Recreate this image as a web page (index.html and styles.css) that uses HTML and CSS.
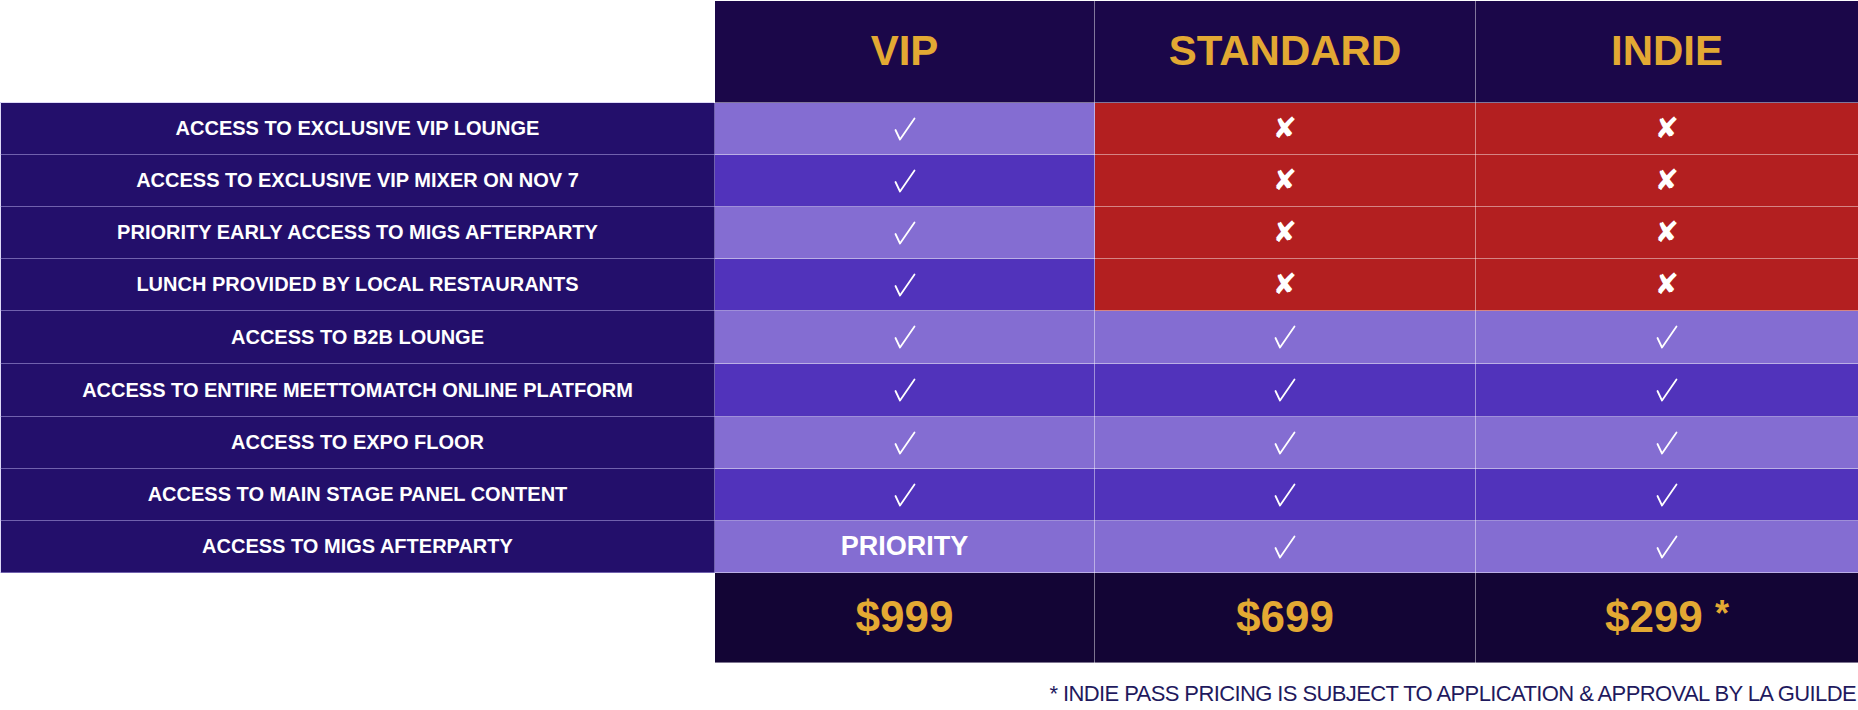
FILE: index.html
```html
<!DOCTYPE html>
<html>
<head>
  <title>Pass Comparison</title>
  <link rel="stylesheet" href="styles.css">
</head>
<body>
  <table class="passes">
    <colgroup>
      <col class="col-feature">
      <col class="col-vip">
      <col class="col-standard">
      <col class="col-indie">
    </colgroup>
    <thead>
      <tr class="head-row">
        <th class="blank"></th>
        <th>VIP</th>
        <th>STANDARD</th>
        <th>INDIE</th>
      </tr>
    </thead>
    <tbody>
      <tr class="light">
        <td class="feature">ACCESS TO EXCLUSIVE VIP LOUNGE</td>
        <td><span class="yes"></span></td>
        <td class="no"><span>&#10008;</span></td>
        <td class="no"><span>&#10008;</span></td>
      </tr>
      <tr class="dark">
        <td class="feature">ACCESS TO EXCLUSIVE VIP MIXER ON NOV 7</td>
        <td><span class="yes"></span></td>
        <td class="no"><span>&#10008;</span></td>
        <td class="no"><span>&#10008;</span></td>
      </tr>
      <tr class="light">
        <td class="feature">PRIORITY EARLY ACCESS TO MIGS AFTERPARTY</td>
        <td><span class="yes"></span></td>
        <td class="no"><span>&#10008;</span></td>
        <td class="no"><span>&#10008;</span></td>
      </tr>
      <tr class="dark">
        <td class="feature">LUNCH PROVIDED BY LOCAL RESTAURANTS</td>
        <td><span class="yes"></span></td>
        <td class="no"><span>&#10008;</span></td>
        <td class="no"><span>&#10008;</span></td>
      </tr>
      <tr class="light tall">
        <td class="feature">ACCESS TO B2B LOUNGE</td>
        <td><span class="yes"></span></td>
        <td><span class="yes"></span></td>
        <td><span class="yes"></span></td>
      </tr>
      <tr class="dark tall">
        <td class="feature">ACCESS TO ENTIRE MEETTOMATCH ONLINE PLATFORM</td>
        <td><span class="yes"></span></td>
        <td><span class="yes"></span></td>
        <td><span class="yes"></span></td>
      </tr>
      <tr class="light">
        <td class="feature">ACCESS TO EXPO FLOOR</td>
        <td><span class="yes"></span></td>
        <td><span class="yes"></span></td>
        <td><span class="yes"></span></td>
      </tr>
      <tr class="dark">
        <td class="feature">ACCESS TO MAIN STAGE PANEL CONTENT</td>
        <td><span class="yes"></span></td>
        <td><span class="yes"></span></td>
        <td><span class="yes"></span></td>
      </tr>
      <tr class="light">
        <td class="feature">ACCESS TO MIGS AFTERPARTY</td>
        <td class="priority">PRIORITY</td>
        <td><span class="yes"></span></td>
        <td><span class="yes"></span></td>
      </tr>
    </tbody>
    <tfoot>
      <tr class="price-row">
        <td class="blank"></td>
        <td>$999</td>
        <td>$699</td>
        <td>$299 <span class="star">*</span></td>
      </tr>
    </tfoot>
  </table>

  <p class="note">* INDIE PASS PRICING IS SUBJECT TO APPLICATION &amp; APPROVAL BY LA GUILDE</p>
</body>
</html>
```

FILE: styles.css
```css
body {
  margin: 0;
  background: #fff;
  font-family: "Liberation Sans", Arial, sans-serif;
}

.passes {
  width: 1858px;
  table-layout: fixed;
  border-collapse: collapse;
  color: #fff;
  text-align: center;
}
.col-feature { width: 714px; }
.col-vip { width: 380px; }
.col-standard { width: 381px; }
.col-indie { width: 383px; }

.passes th,
.passes td {
  border: 1px solid rgba(255, 255, 255, 0.45);
  padding: 0;
  vertical-align: middle;
}
.passes .blank {
  background: #fff;
  border: none;
}

.head-row {
  height: 102px;
}
.head-row th {
  background: #1b0749;
  color: #e3a933;
  font-size: 42px;
  font-weight: bold;
  padding-bottom: 2px;
}

tbody tr {
  height: 52px;
}
tbody tr.tall {
  height: 53px;
}
.light td { background: #846dd2; }
.dark td { background: #5133bb; }
.passes td.feature {
  background: #230f6b;
  border-color: rgba(190, 180, 240, 0.5);
  font-size: 20px;
  font-weight: bold;
}
.passes td.no {
  background: #b31f20;
}
.no span {
  font-family: "DejaVu Sans", sans-serif;
  font-size: 29px;
  line-height: 1;
}
.yes {
  display: inline-block;
  width: 22px;
  height: 24px;
  vertical-align: middle;
  background: url("data:image/svg+xml;utf8,<svg xmlns='http://www.w3.org/2000/svg' viewBox='0 0 22 24'><path d='M1.5 13 L6 22.5 L20.5 1.5' fill='none' stroke='white' stroke-width='1.8' stroke-linecap='round' stroke-linejoin='round'/></svg>") no-repeat center;
}
.priority {
  font-size: 27px;
  font-weight: bold;
}

.price-row {
  height: 90px;
}
.price-row td {
  background: #130535;
  color: #e3a933;
  font-size: 44px;
  font-weight: bold;
  padding-bottom: 2px;
}
.star {
  font-size: 36px;
  vertical-align: 6px;
}

.note {
  margin: 18px 2px 0 0;
  text-align: right;
  color: #1f1a5e;
  font-size: 22px;
  letter-spacing: -0.6px;
}
```
